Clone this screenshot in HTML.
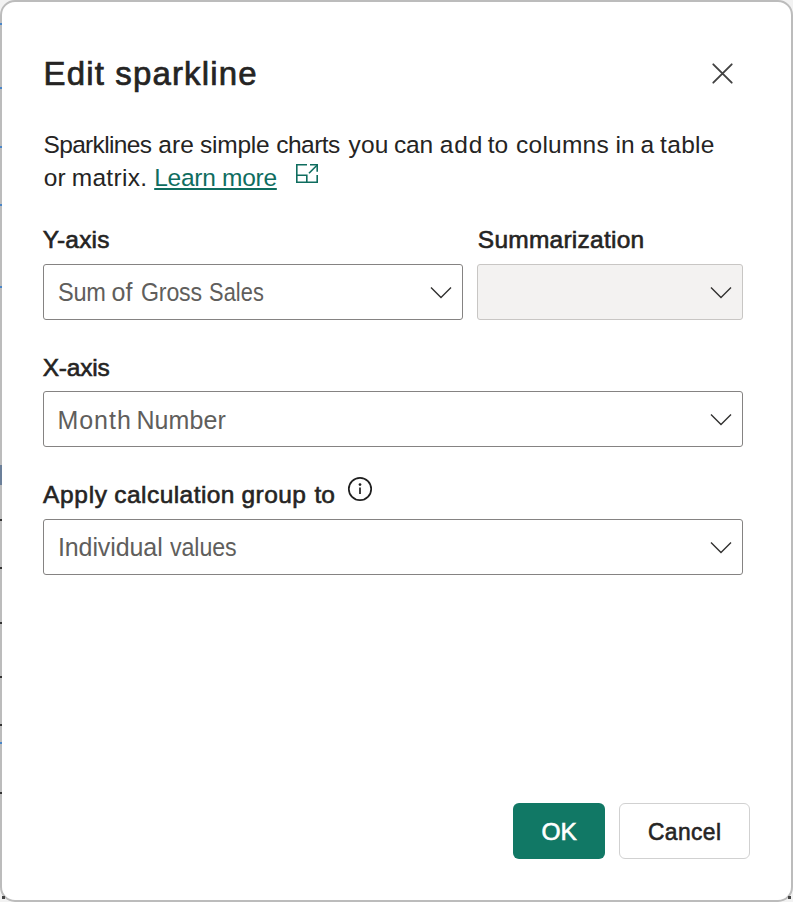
<!DOCTYPE html>
<html>
<head>
<meta charset="utf-8">
<style>
html,body{margin:0;padding:0;}
body{width:793px;height:902px;background:#f2f2f2;position:relative;overflow:hidden;font-family:"Liberation Sans",sans-serif;color:#252423;}
.dlg{position:absolute;left:0;top:0;width:789px;height:898px;border:2px solid #bcbcbc;border-radius:15px;background:#fff;}
.t{position:absolute;white-space:nowrap;line-height:1;}
.b{-webkit-text-stroke:0.6px currentColor;}
.bt{-webkit-text-stroke:0.7px currentColor;}
.link{color:#0f6d5f;text-decoration:underline;text-decoration-thickness:2px;text-underline-offset:2px;}
.inp{position:absolute;box-sizing:border-box;height:56px;border:1.5px solid #858382;border-radius:3px;background:#fff;}
.gv{color:#605e5c;}
.chev{position:absolute;}
.dis{background:#f3f2f1;border-color:#c8c6c4;}
.btn{position:absolute;box-sizing:border-box;height:56px;border-radius:6px;}
.ok{left:513px;top:803px;width:92px;background:#117865;}
.cancel{left:619px;top:803px;width:131px;border:1.5px solid #d1d1d1;background:#fff;}
.w{color:#fff;}
</style>
</head>
<body>
<div class="dlg"></div>
<div style="position:absolute;left:0;top:23px;width:2px;height:2px;background:#4a86c8"></div><div style="position:absolute;left:0;top:87px;width:2px;height:2px;background:#4a86c8"></div><div style="position:absolute;left:0;top:146px;width:2px;height:2px;background:#4a86c8"></div><div style="position:absolute;left:0;top:204px;width:2px;height:2px;background:#4a86c8"></div><div style="position:absolute;left:0;top:286px;width:2px;height:2px;background:#4a86c8"></div><div style="position:absolute;left:0;top:465px;width:2px;height:20px;background:#6b7f99"></div><div style="position:absolute;left:0;top:519px;width:2px;height:2px;background:#333"></div><div style="position:absolute;left:0;top:567px;width:2px;height:2px;background:#333"></div><div style="position:absolute;left:0;top:622px;width:2px;height:2px;background:#333"></div><div style="position:absolute;left:0;top:676px;width:2px;height:2px;background:#333"></div><div style="position:absolute;left:0;top:724px;width:2px;height:2px;background:#333"></div><div style="position:absolute;left:0;top:742px;width:2px;height:2px;background:#4a86c8"></div><div style="position:absolute;left:0;top:792px;width:2px;height:2px;background:#333"></div><div style="position:absolute;left:2px;top:896px;width:3px;height:3px;background:#444"></div><div style="position:absolute;left:788px;top:896px;width:3px;height:3px;background:#444"></div>
<svg style="position:absolute;left:710px;top:61px" width="25" height="25" viewBox="0 0 25 25"><path d="M3.3 3.3L21.7 21.7M21.7 3.3L3.3 21.7" stroke="#424242" stroke-width="1.9" stroke-linecap="round"/></svg>
<svg style="position:absolute;left:294px;top:162px" width="26" height="23" viewBox="0 0 26 23"><g fill="none" stroke="#0f6d5f" stroke-width="1.6"><path d="M13 2.8H2.8V20.2H23.2V13"/><path d="M2.8 13.2H12.8V20.2"/><path d="M16 2.8H23.2V9.8"/><path d="M15 11.2L23 3.2"/></g></svg>
<div class="inp" style="left:43px;top:264px;width:420px"></div>
<div class="inp dis" style="left:477px;top:264px;width:266px"></div>
<div class="inp" style="left:43px;top:391px;width:700px"></div>
<svg style="position:absolute;left:346px;top:475px" width="28" height="28" viewBox="0 0 28 28"><circle cx="14" cy="14" r="11.2" fill="none" stroke="#1f1f1f" stroke-width="1.7"/><circle cx="14" cy="9.6" r="1.35" fill="#1f1f1f"/><path d="M14 12.6V19" stroke="#1f1f1f" stroke-width="1.7"/></svg>
<div class="inp" style="left:43px;top:519px;width:700px"></div>
<svg class="chev" style="left:430px;top:286px" width="22" height="13" viewBox="0 0 22 13"><path d="M1 1.5L11 11.5L21 1.5" fill="none" stroke="#323130" stroke-width="1.4"/></svg>
<svg class="chev" style="left:710px;top:286px" width="22" height="13" viewBox="0 0 22 13"><path d="M1 1.5L11 11.5L21 1.5" fill="none" stroke="#323130" stroke-width="1.4"/></svg>
<svg class="chev" style="left:710px;top:413px" width="22" height="13" viewBox="0 0 22 13"><path d="M1 1.5L11 11.5L21 1.5" fill="none" stroke="#323130" stroke-width="1.4"/></svg>
<svg class="chev" style="left:710px;top:541px" width="22" height="13" viewBox="0 0 22 13"><path d="M1 1.5L11 11.5L21 1.5" fill="none" stroke="#323130" stroke-width="1.4"/></svg>
<div class="btn ok"></div>
<div class="btn cancel"></div>
<div id="title" class="t bt" style="left:43.50px;top:56.80px;font-size:33px;letter-spacing:1.154px;">Edit sparkline</div>
<div id="body1_0" class="t " style="left:43.50px;top:132.91px;font-size:24.5px;letter-spacing:-0.667px;">Sparklines</div>
<div id="body1_1" class="t " style="left:158.20px;top:132.91px;font-size:24.5px;letter-spacing:0.200px;">are</div>
<div id="body1_2" class="t " style="left:200.10px;top:132.91px;font-size:24.5px;letter-spacing:-0.240px;">simple</div>
<div id="body1_3" class="t " style="left:276.20px;top:132.91px;font-size:24.5px;letter-spacing:-0.520px;">charts</div>
<div id="body1_4" class="t " style="left:348.60px;top:132.91px;font-size:24.5px;letter-spacing:0.100px;">you</div>
<div id="body1_5" class="t " style="left:393.90px;top:132.91px;font-size:24.5px;letter-spacing:-0.100px;">can</div>
<div id="body1_6" class="t " style="left:439.70px;top:132.91px;font-size:24.5px;letter-spacing:0.900px;">add</div>
<div id="body1_7" class="t " style="left:487.70px;top:132.91px;font-size:24.5px;letter-spacing:0.000px;">to</div>
<div id="body1_8" class="t " style="left:516.10px;top:132.91px;font-size:24.5px;letter-spacing:0.233px;">columns</div>
<div id="body1_9" class="t " style="left:615.60px;top:132.91px;font-size:24.5px;letter-spacing:0.000px;">in</div>
<div id="body1_10" class="t " style="left:640.40px;top:132.91px;font-size:24.5px;letter-spacing:0.000px;">a</div>
<div id="body1_11" class="t " style="left:660.10px;top:132.91px;font-size:24.5px;letter-spacing:0.300px;">table</div>
<div id="body2_0" class="t " style="left:43.80px;top:165.70px;font-size:24.5px;letter-spacing:0.000px;">or</div>
<div id="body2_1" class="t " style="left:71.70px;top:165.70px;font-size:24.5px;letter-spacing:0.300px;">matrix.</div>
<div id="lnk" class="t " style="left:154.20px;top:165.70px;font-size:24.5px;letter-spacing:-0.267px;"><span class="link">Learn more</span></div>
<div id="yl" class="t b" style="left:42.70px;top:227.70px;font-size:24.5px;letter-spacing:0.200px;">Y-axis</div>
<div id="sl" class="t b" style="left:477.80px;top:227.70px;font-size:24.5px;letter-spacing:0.250px;">Summarization</div>
<div id="v1_0" class="t gv" style="left:58.10px;top:279.70px;font-size:25px;letter-spacing:-0.319px;transform:scaleX(0.9417);transform-origin:0 0;">Sum</div>
<div id="v1_1" class="t gv" style="left:111.50px;top:279.70px;font-size:25px;letter-spacing:0.000px;">of</div>
<div id="v1_2" class="t gv" style="left:140.50px;top:279.70px;font-size:25px;letter-spacing:-0.162px;transform:scaleX(0.9256);transform-origin:0 0;">Gross</div>
<div id="v1_3" class="t gv" style="left:208.50px;top:279.70px;font-size:25px;letter-spacing:0.115px;transform:scaleX(0.8711);transform-origin:0 0;">Sales</div>
<div id="xl" class="t b" style="left:42.70px;top:355.70px;font-size:24.5px;letter-spacing:-0.200px;">X-axis</div>
<div id="v2_0" class="t gv" style="left:57.40px;top:407.81px;font-size:25px;letter-spacing:1.000px;">Month</div>
<div id="v2_1" class="t gv" style="left:136.40px;top:407.81px;font-size:25px;letter-spacing:0.080px;">Number</div>
<div id="al_0" class="t b" style="left:43.00px;top:483.30px;font-size:24.5px;letter-spacing:0.700px;">Apply</div>
<div id="al_1" class="t b" style="left:114.30px;top:483.30px;font-size:24.5px;letter-spacing:0.440px;">calculation</div>
<div id="al_2" class="t b" style="left:241.50px;top:483.30px;font-size:24.5px;letter-spacing:0.450px;">group</div>
<div id="al_3" class="t b" style="left:314.40px;top:483.30px;font-size:24.5px;letter-spacing:0.000px;">to</div>
<div id="v3_0" class="t gv" style="left:57.90px;top:535.20px;font-size:25px;letter-spacing:-0.089px;">Individual</div>
<div id="v3_1" class="t gv" style="left:170.20px;top:535.20px;font-size:25px;letter-spacing:-0.086px;transform:scaleX(0.9273);transform-origin:0 0;">values</div>
<div id="okt" class="t b w" style="left:541.50px;top:820.01px;font-size:24.5px;letter-spacing:0.000px;">OK</div>
<div id="cat" class="t b" style="left:647.60px;top:820.01px;font-size:24.5px;letter-spacing:0.452px;transform:scaleX(0.9300);transform-origin:0 0;">Cancel</div>
</body>
</html>
